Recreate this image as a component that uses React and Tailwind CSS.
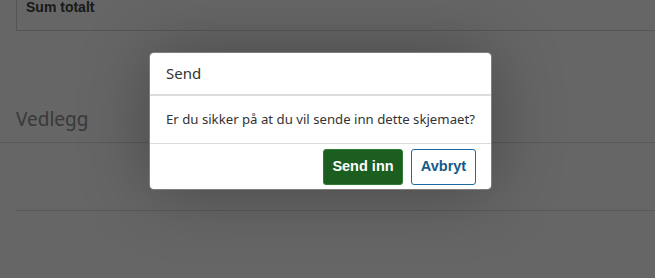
import React from "react";

export default function App() {
  return (
    <div className="relative h-[278px] w-[655px] overflow-hidden bg-white" style={{ fontFamily: '"Noto Sans", sans-serif' }}>
      {/* underlying page */}
      <div className="flex flex-col">
        <div className="ml-4 w-[660px] h-[31px] border-l border-b border-[#d6d6d6] px-[9px]">
          <div className="-mt-[3px] text-[14px] font-bold text-[#404040]" style={{ fontFamily: '"Liberation Sans", Arial, sans-serif' }}>Sum totalt</div>
        </div>
        <div className="pl-4 pt-[76px] pb-[10px] text-[19px] text-[#909090] leading-[25px] border-b border-[#dcdcdc]">Vedlegg</div>
        <div className="ml-4 h-[68px] border-b border-[#dcdcdc]"></div>
      </div>

      {/* overlay */}
      <div className="absolute inset-0 bg-black/60"></div>

      {/* modal */}
      <div className="absolute left-[149px] top-[52px] w-[343px] rounded-[5px] border border-black/50 bg-white shadow-[0_0_70px_rgba(0,0,0,0.3)] overflow-hidden">
        <div className="h-[43px] flex items-center px-4 border-b-2 border-[#dcdcdc]">
          <span className="text-[15px] text-[#333]">Send</span>
        </div>
        <div className="h-[48px] flex items-center px-4 border-b border-[#dcdcdc]">
          <span className="text-[13.2px] text-[#333] whitespace-nowrap">Er du sikker på at du vil sende inn dette skjemaet?</span>
        </div>
        <div className="flex justify-end gap-2 px-[15px] pt-[5px] pb-[4px]">
          <button className="h-[36px] w-[80px] rounded-[3px] border border-[#2e7d32] bg-[#1b5e20] text-white text-[14.5px] font-bold" style={{ fontFamily: '"Liberation Sans", Arial, sans-serif' }}>Send inn</button>
          <button className="h-[36px] w-[65px] rounded-[3px] border border-[#1f6aa0] bg-white text-[#155a8a] text-[14.5px] font-bold" style={{ fontFamily: '"Liberation Sans", Arial, sans-serif' }}>Avbryt</button>
        </div>
      </div>
    </div>
  );
}
